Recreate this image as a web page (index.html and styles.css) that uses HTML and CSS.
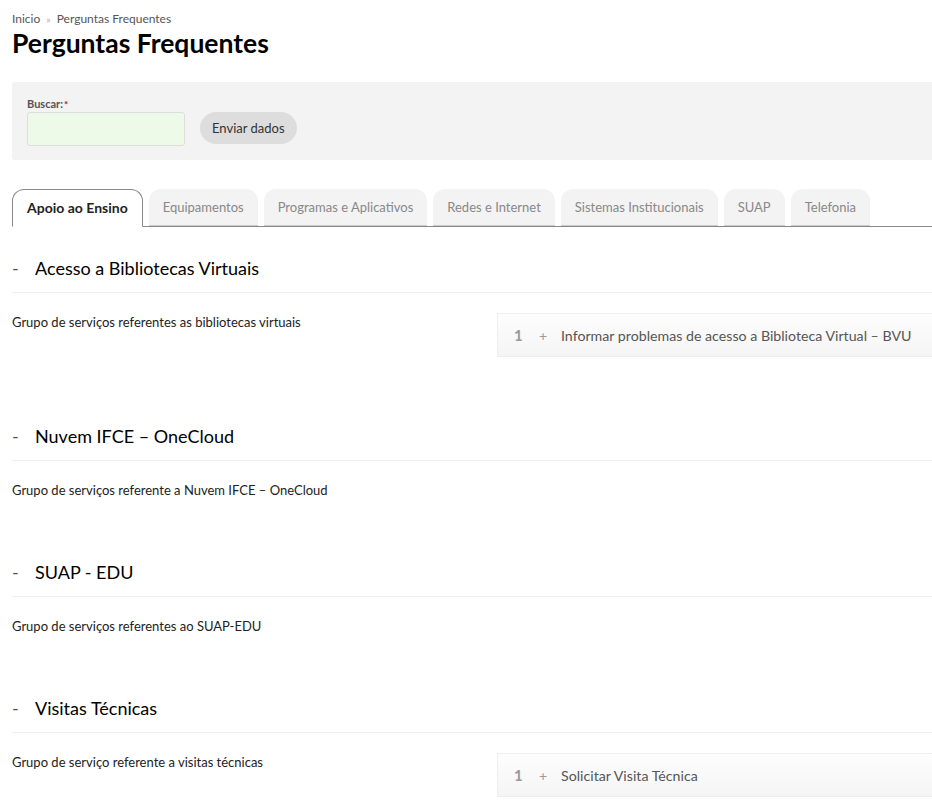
FILE: index.html
```html
<!DOCTYPE html>
<html lang="pt-BR">
<head>
<meta charset="utf-8">
<title>Perguntas Frequentes</title>
<link rel="stylesheet" href="styles.css">
</head>
<body>
<div class="page">
  <div class="breadcrumb"><a href="#">Inicio</a> <span class="sep">»</span> <a href="#">Perguntas Frequentes</a></div>
  <h1 class="page-title">Perguntas Frequentes</h1>

  <form class="search-box">
    <div class="field">
      <label class="field-label">Buscar:<span class="req">*</span></label>
      <div class="field-row">
        <input type="text" class="field-input">
        <button type="button" class="btn">Enviar dados</button>
      </div>
    </div>
  </form>

  <ul class="tabs">
    <li class="tab active">Apoio ao Ensino</li>
    <li class="tab">Equipamentos</li>
    <li class="tab">Programas e Aplicativos</li>
    <li class="tab">Redes e Internet</li>
    <li class="tab">Sistemas Institucionais</li>
    <li class="tab">SUAP</li>
    <li class="tab">Telefonia</li>
  </ul>

  <div class="tab-content">
    <section class="group">
      <h2 class="group-title"><span class="toggle">-</span>Acesso a Bibliotecas Virtuais</h2>
      <div class="group-body">
        <p class="group-desc">Grupo de serviços referentes as bibliotecas virtuais</p>
        <ul class="items">
          <li class="item"><span class="num">1</span><span class="plus">+</span>Informar problemas de acesso a Biblioteca Virtual – BVU</li>
        </ul>
      </div>
    </section>

    <section class="group">
      <h2 class="group-title"><span class="toggle">-</span>Nuvem IFCE – OneCloud</h2>
      <div class="group-body">
        <p class="group-desc">Grupo de serviços referente a Nuvem IFCE – OneCloud</p>
      </div>
    </section>

    <section class="group">
      <h2 class="group-title"><span class="toggle">-</span>SUAP - EDU</h2>
      <div class="group-body">
        <p class="group-desc">Grupo de serviços referentes ao SUAP-EDU</p>
      </div>
    </section>

    <section class="group">
      <h2 class="group-title"><span class="toggle">-</span>Visitas Técnicas</h2>
      <div class="group-body">
        <p class="group-desc">Grupo de serviço referente a visitas técnicas</p>
        <ul class="items">
          <li class="item"><span class="num">1</span><span class="plus">+</span>Solicitar Visita Técnica</li>
        </ul>
      </div>
    </section>
  </div>
</div>
</body>
</html>
```

FILE: styles.css
```css
html, body {
  margin: 0;
  padding: 0;
  overflow: hidden;
  background: #fff;
}
body {
  font-family: Lato, "Liberation Sans", sans-serif;
  color: #222;
}
.page {
  width: 970px;
  padding: 11px 0 0 12px;
}
.breadcrumb {
  font-size: 12px;
  line-height: 15px;
  color: #555;
}
.breadcrumb a {
  color: #555;
  text-decoration: none;
}
.breadcrumb .sep {
  color: #aaa;
  font-size: 10px;
  margin: 0 3px;
}
.page-title {
  margin: 0;
  font-size: 26.5px;
  line-height: 32px;
  font-weight: 700;
  color: #000;
}
.search-box {
  margin-top: 23px;
  background: #f3f3f3;
  border-radius: 3px;
  padding: 15px 15px 15px;
  height: 48px;
}
.field-label {
  display: block;
  font-size: 11px;
  font-weight: 700;
  color: #555;
  line-height: 14px;
}
.req {
  color: #d00;
  font-size: 10px;
  vertical-align: top;
  margin-left: 1px;
}
.field-row {
  display: flex;
  align-items: flex-start;
  gap: 15px;
  margin-top: 1px;
}
.field-input {
  box-sizing: border-box;
  width: 158px;
  height: 34px;
  background: #eefae8;
  border: 1px solid #ddd;
  border-radius: 3px;
  margin: 0;
}
.btn {
  box-sizing: border-box;
  height: 32px;
  padding: 0 12px;
  background: #ddd;
  border: 0;
  border-radius: 16px;
  font-family: Lato, "Liberation Sans", sans-serif;
  font-size: 13px;
  color: #333;
  margin: 0;
}
.tabs {
  list-style: none;
  margin: 29px 0 0;
  padding: 0;
  display: flex;
  gap: 6px;
  border-bottom: 1px solid #888;
  height: 37px;
}
.tab {
  box-sizing: border-box;
  height: 37px;
  padding: 0 14px;
  line-height: 37px;
  font-size: 13px;
  color: #888;
  background: #f3f3f3;
  border-radius: 12px 12px 0 0;
  border-bottom: 1px solid #ccc;
}
.tab.active {
  height: 38px;
  padding: 0 14px;
  font-size: 14px;
  color: #222;
  font-weight: 700;
  background: #fff;
  border: 1px solid #888;
  border-bottom: 1px solid #fff;
  line-height: 36px;
}
.tab-content {
  padding-top: 21px;
}
.group-title {
  margin: 0;
  padding: 8px 0 12px;
  font-size: 18px;
  line-height: 24px;
  font-weight: 400;
  color: #000;
  border-bottom: 1px solid #eee;
}
.toggle {
  display: inline-block;
  width: 23px;
  color: #555;
}
.group-body {
  display: flex;
  padding-top: 20px;
  margin-bottom: 53px;
}
.group-desc {
  margin: 0;
  width: 485px;
  font-size: 13px;
  line-height: 18px;
  color: #222;
}
.items {
  list-style: none;
  margin: 0 0 6px;
  padding: 0;
  flex: 1;
}
.item {
  box-sizing: border-box;
  height: 44px;
  line-height: 42px;
  padding-left: 16px;
  font-size: 14.2px;
  color: #555;
  border: 1px solid #eee;
  background: linear-gradient(#fdfdfd, #f5f5f5);
}
.num {
  display: inline-block;
  width: 25px;
  font-weight: 700;
  font-size: 15px;
  color: #999;
}
.plus {
  display: inline-block;
  width: 22px;
  color: #999;
  font-size: 14px;
}
```
